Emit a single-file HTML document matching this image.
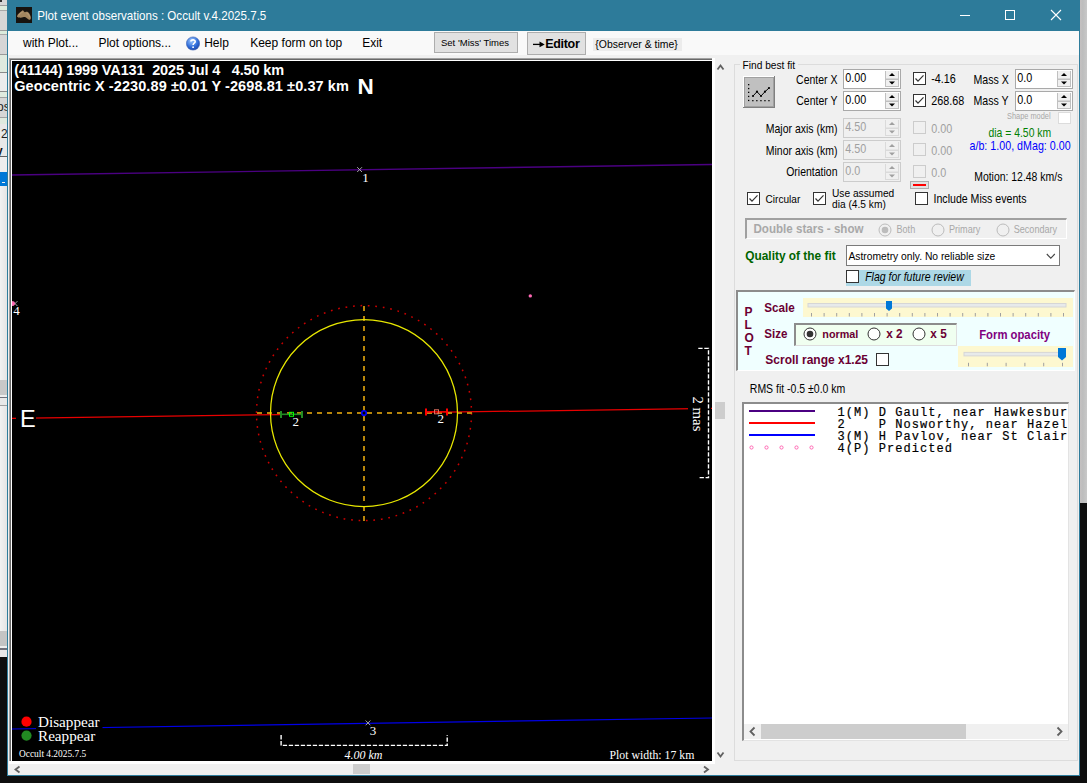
<!DOCTYPE html>
<html><head><meta charset="utf-8"><style>
html,body{margin:0;padding:0}
body{width:1087px;height:783px;position:relative;overflow:hidden;background:#0e0e0e;font-family:"Liberation Sans", sans-serif}
.t{position:absolute;white-space:pre}
.r{position:absolute}
</style></head><body>
<div class="r" style="left:0px;top:0px;width:7px;height:657px;background:linear-gradient(90deg,#f2f2f2,#e4e4e4)"></div>
<div class="r" style="left:0px;top:0px;width:7px;height:72px;background:#d6d6d6"></div>
<div class="r" style="left:0px;top:0px;width:2px;height:2px;background:#303030"></div>
<div class="r" style="left:0px;top:5px;width:7px;height:1px;background:#9a9a9a"></div>
<div class="r" style="left:0px;top:6px;width:7px;height:4px;background:#dcebdc"></div>
<div class="r" style="left:0px;top:10px;width:7px;height:1px;background:#a8a8a8"></div>
<div class="r" style="left:0px;top:30px;width:7px;height:1px;background:#9a9a9a"></div>
<div class="r" style="left:0px;top:31px;width:7px;height:3px;background:#dcebdc"></div>
<div class="r" style="left:0px;top:34px;width:7px;height:1px;background:#a8a8a8"></div>
<div class="r" style="left:0px;top:54px;width:7px;height:1px;background:#9a9a9a"></div>
<div class="r" style="left:0px;top:55px;width:7px;height:17px;background:#dfeadf"></div>
<div class="r" style="left:0px;top:72px;width:7px;height:1px;background:#8a8a8a"></div>
<div class="r" style="left:0px;top:73px;width:7px;height:18px;background:#ececec"></div>
<div class="r" style="left:0px;top:91px;width:7px;height:1px;background:#8a8a8a"></div>
<div class="r" style="left:0px;top:92px;width:7px;height:5px;background:#dfeadf"></div>
<div class="r" style="left:0px;top:97px;width:7px;height:1px;background:#a0a0a0"></div>
<div class="r" style="left:0px;top:98px;width:7px;height:19px;background:#d6d6d6"></div>
<div class="t" style="left:-3px;top:101px;font:12px/1 'Liberation Sans', sans-serif;color:#222">os</div>
<div class="r" style="left:0px;top:117px;width:7px;height:1px;background:#a0a0a0"></div>
<div class="r" style="left:0px;top:118px;width:7px;height:6px;background:#dfeadf"></div>
<div class="r" style="left:0px;top:124px;width:7px;height:32px;background:#e8e8e8"></div>
<div class="t" style="left:1px;top:128px;font:12px/1 'Liberation Sans', sans-serif;color:#222">2</div>
<div class="t" style="left:-4px;top:145px;font:bold 12px/1 'Liberation Sans', sans-serif;color:#111">y</div>
<div class="r" style="left:0px;top:156px;width:7px;height:1px;background:#606060"></div>
<div class="r" style="left:0px;top:157px;width:7px;height:15px;background:#eeeeee"></div>
<div class="r" style="left:0px;top:172px;width:7px;height:14px;background:#0078d7"></div>
<div class="r" style="left:2px;top:182px;width:3px;height:1px;background:#f0f0f0"></div>
<div class="r" style="left:0px;top:380px;width:7px;height:15px;background:#c8c8c8"></div>
<div class="r" style="left:0px;top:395px;width:7px;height:2px;background:#eeeeee"></div>
<div class="r" style="left:0px;top:397px;width:7px;height:1px;background:#70707a"></div>
<div class="r" style="left:0px;top:398px;width:7px;height:7px;background:#e8e8e8"></div>
<div class="r" style="left:0px;top:405px;width:7px;height:1px;background:#a0a0a0"></div>
<div class="r" style="left:0px;top:631px;width:7px;height:15px;background:#c4c4c4"></div>
<div class="r" style="left:0px;top:646px;width:7px;height:2px;background:#eeeeee"></div>
<div class="r" style="left:0px;top:648px;width:7px;height:2px;background:#70707a"></div>
<div class="r" style="left:0px;top:650px;width:7px;height:7px;background:#e8e8e8"></div>
<div class="r" style="left:1080px;top:0px;width:7px;height:503px;background:linear-gradient(90deg,#c4c0c0,#bdbdbd 40%,#c8c8c8)"></div>
<div class="r" style="left:7px;top:0px;width:1073px;height:776px;background:#f0f0f0"></div>
<div class="r" style="left:7px;top:0px;width:1px;height:776px;background:#2f7d9c"></div>
<div class="r" style="left:1079px;top:0px;width:1px;height:776px;background:#2f7d9c"></div>
<div class="r" style="left:7px;top:775px;width:1073px;height:1px;background:#2f7d9c"></div>
<div class="r" style="left:7px;top:0px;width:1073px;height:31px;background:#2d7b9a"></div>
<svg class="r" style="left:16px;top:7px" width="16" height="16" viewBox="0 0 16 16"><rect width="16" height="16" fill="#17130f"/><path d="M0.9 9.6 C1.5 7 4 5 6.8 3.2 C7.8 3.8 8.3 5 9 5.3 C10 4.8 11 4.7 11.8 5 C13.5 6 14.8 9 14.9 11 C14.8 12.5 13.8 13 13 12.8 C11.5 12 10.3 10.3 9 10 C7.5 10 6 10.8 4.5 10.7 C3 10.6 1.8 10.6 0.9 9.6Z" fill="#a3865f"/><path d="M2.5 8.5 C4 6.5 5.5 5.5 6.8 4.8 M10.5 6 C12 6.5 13.5 9 13.8 10.5" stroke="#bfa37e" stroke-width="1.2" fill="none" opacity="0.6"/></svg>
<div class="r" style="left:960px;top:15px;width:10px;height:1px;background:#fff"></div>
<div class="r" style="left:1005px;top:10px;width:10px;height:10px;border:1px solid #fff;box-sizing:border-box"></div>
<svg class="r" style="left:1050px;top:9px" width="12" height="12" viewBox="0 0 12 12"><path d="M1 1 L11 11 M11 1 L1 11" stroke="#fff" stroke-width="1.1"/></svg>
<div class="r" style="left:8px;top:31px;width:1071px;height:24px;background:#f9f9f9"></div>
<svg class="r" style="left:186px;top:35.5px" width="14" height="15" viewBox="0 0 14 15"><defs><radialGradient id="hg" cx="0.4" cy="0.3" r="0.8"><stop offset="0" stop-color="#9cc8ff"/><stop offset="0.6" stop-color="#2c6ad8"/><stop offset="1" stop-color="#1b3e9a"/></radialGradient></defs><circle cx="7" cy="7.5" r="6.6" fill="url(#hg)" stroke="#3a5fb0" stroke-width="0.6"/><path d="M4.9 5.6 C4.9 3.3 9.2 3.3 9.2 5.6 C9.2 7.2 7.1 7.2 7.1 9" stroke="#fff" stroke-width="1.6" fill="none"/><circle cx="7.1" cy="11.2" r="0.9" fill="#fff"/></svg>
<div class="r" style="left:434px;top:32px;width:84px;height:21px;background:#e1e1e1;border:1px solid #adadad;box-sizing:border-box"></div>
<div class="r" style="left:527px;top:32px;width:59px;height:23px;background:#e1e1e1;border:1px solid #adadad;box-sizing:border-box"></div>
<svg class="r" style="left:532px;top:40px" width="14" height="9" viewBox="532 40 14 9"><path d="M533 44.4 H543" stroke="#000" stroke-width="1.3"/><path d="M539.5 41.5 L544.7 44.4 L539.5 47.3Z" fill="#000"/></svg>
<div class="r" style="left:593px;top:38px;width:89px;height:13px;background:#ececec"></div>
<div class="r" style="left:9px;top:58px;width:703px;height:1px;background:#a0a0a0"></div>
<div class="r" style="left:9px;top:58px;width:1px;height:705px;background:#a0a0a0"></div>
<div class="r" style="left:10px;top:59px;width:702px;height:1px;background:#696969"></div>
<div class="r" style="left:10px;top:59px;width:1px;height:703px;background:#696969"></div>
<div class="r" style="left:11px;top:60px;width:701px;height:1px;background:#fff"></div>
<div class="r" style="left:11px;top:60px;width:1px;height:701px;background:#fff"></div>
<div class="r" style="left:712px;top:58px;width:3px;height:706px;background:#fff"></div>
<div class="r" style="left:9px;top:761px;width:706px;height:3px;background:#fff"></div>
<svg class="r" style="left:714px;top:60px" width="14" height="704" viewBox="714 60 14 704"><path d="M717.5 69.5 L720.5 65.5 L723.5 69.5" stroke="#606060" stroke-width="1.8" fill="none"/><path d="M717.5 752.5 L720.5 756.5 L723.5 752.5" stroke="#606060" stroke-width="1.8" fill="none"/><rect x="715" y="402" width="10" height="17" fill="#cdcdcd"/></svg>
<svg class="r" style="left:8px;top:764px" width="708" height="11" viewBox="8 764 708 11"><path d="M19.5 766.5 L15.5 769.5 L19.5 772.5" stroke="#606060" stroke-width="1.8" fill="none"/><path d="M704 766.5 L708 769.5 L704 772.5" stroke="#606060" stroke-width="1.8" fill="none"/><rect x="353" y="764" width="17" height="10" fill="#cdcdcd"/></svg>
<svg class="r" style="left:12px;top:61px" width="700" height="700" viewBox="12 61 700 700"><rect x="12" y="61" width="700" height="700" fill="#000"/><line x1="12" y1="175.0" x2="712" y2="164.5" stroke="#4b0082" stroke-width="1.4" /><line x1="12" y1="418.5" x2="280" y2="414.5872" stroke="#e80000" stroke-width="1.25" /><line x1="447" y1="412.149" x2="712" y2="408.28" stroke="#e80000" stroke-width="1.25" /><line x1="12" y1="729.0" x2="712" y2="718.01" stroke="#0000e8" stroke-width="1.2" /><rect x="16" y="402" width="20" height="30" fill="#000"/><rect x="36" y="713" width="66.5" height="30" fill="#000"/><rect x="688" y="393" width="23" height="41" fill="#000"/><circle cx="364" cy="413.1" r="107.5" fill="none" stroke="#cc0000" stroke-width="1.5" stroke-dasharray="1.7 5.8"/><line x1="364" y1="306" x2="364" y2="521" stroke="#b8860b" stroke-width="2" stroke-dasharray="5 5"/><line x1="257" y1="413" x2="472" y2="413" stroke="#b8860b" stroke-width="2" stroke-dasharray="5 5"/><circle cx="364" cy="413.1" r="93.5" fill="none" stroke="#e8e800" stroke-width="1.25"/><circle cx="364" cy="413.1" r="2.3" fill="none" stroke="#0000ff" stroke-width="1.6"/><line x1="281" y1="414.3" x2="302" y2="414.3" stroke="#228b22" stroke-width="1.6" /><line x1="281" y1="411" x2="281" y2="418" stroke="#228b22" stroke-width="2" /><line x1="302" y1="411" x2="302" y2="418" stroke="#228b22" stroke-width="2" /><rect x="289.5" y="412.3" width="4" height="4" fill="none" stroke="#00ff00" stroke-width="1"/><line x1="426" y1="411.9" x2="447" y2="411.9" stroke="#ff0000" stroke-width="1.6" /><line x1="426" y1="408.5" x2="426" y2="415.5" stroke="#ff0000" stroke-width="2" /><line x1="447" y1="408.5" x2="447" y2="415.5" stroke="#ff0000" stroke-width="2" /><rect x="434.5" y="409.8" width="4" height="4" fill="none" stroke="#e07060" stroke-width="1"/><path d="M357.20000000000005 167.2 L362.0 172.0 M362.0 167.2 L357.20000000000005 172.0" stroke="#a8a8a8" stroke-width="1"/><path d="M365.6 720.5 L370.4 725.3 M370.4 720.5 L365.6 725.3" stroke="#a8a8a8" stroke-width="1"/><path d="M12.6 301.20000000000005 L17.4 306.0 M17.4 301.20000000000005 L12.6 306.0" stroke="#a8a8a8" stroke-width="1"/><circle cx="12.6" cy="303.6" r="2.4" fill="#ff69b4"/><circle cx="530.3" cy="295.9" r="1.7" fill="#ff69b4"/><path d="M698.3 348.4 H708.5 V477.6 H698.3" fill="none" stroke="#fff" stroke-width="1.4" stroke-dasharray="4.3 1.7"/><path d="M281.1 735.1 V745.4 H447.2 V735.1" fill="none" stroke="#fff" stroke-width="1.4" stroke-dasharray="4.3 1.7"/><circle cx="26.5" cy="721.7" r="5.1" fill="#ff0000"/><circle cx="26.5" cy="735.6" r="5.1" fill="#228b22"/></svg>
<div class="r" style="left:734px;top:64px;width:344px;height:697px;border:1px solid #dcdcdc;box-sizing:border-box"></div>
<div class="r" style="left:740px;top:60px;width:58px;height:9px;background:#f0f0f0"></div>
<svg class="r" style="left:743px;top:76px" width="32" height="32" viewBox="743 76 32 32"><rect x="743" y="76" width="32" height="32" fill="#808080"/><rect x="743" y="76" width="31" height="31" fill="#ffffff"/><rect x="744" y="77" width="30" height="30" fill="#a0a0a0"/><rect x="745" y="78" width="28" height="28" fill="#c0c0c0"/><rect x="748" y="84.0" width="1.3" height="1.3" fill="#000"/><rect x="748" y="87.9" width="1.3" height="1.3" fill="#000"/><rect x="748" y="91.7" width="1.3" height="1.3" fill="#000"/><rect x="748" y="95.80000000000001" width="1.3" height="1.3" fill="#000"/><rect x="748" y="99.80000000000001" width="1.3" height="1.3" fill="#000"/><rect x="752.1999999999999" y="100" width="1.3" height="1.3" fill="#000"/><rect x="756.1999999999999" y="100" width="1.3" height="1.3" fill="#000"/><rect x="760.3" y="100" width="1.3" height="1.3" fill="#000"/><rect x="764.3" y="100" width="1.3" height="1.3" fill="#000"/><rect x="768.3" y="100" width="1.3" height="1.3" fill="#000"/><polyline points="753,96 757,91.7 761,96 765,91.7 769,88" fill="none" stroke="#000" stroke-width="1"/><circle cx="753" cy="96" r="1.1" fill="#000"/><circle cx="757" cy="91.7" r="1.1" fill="#000"/><circle cx="761" cy="96" r="1.1" fill="#000"/><circle cx="765" cy="91.7" r="1.1" fill="#000"/><circle cx="769" cy="88" r="1.1" fill="#000"/></svg>
<div class="r" style="left:843px;top:69px;width:58px;height:20px;background:#fff;border:1px solid #a9a9a9;box-sizing:border-box"></div>
<svg class="r" style="left:885px;top:71px" width="14" height="16" viewBox="0 0 14 16"><rect x="0" y="0" width="14" height="16" fill="#f0f0f0"/><rect x="0" y="0" width="1" height="16" fill="#c0c0c0"/><rect x="13" y="0" width="1" height="16" fill="#c0c0c0"/><rect x="0" y="7.5" width="14" height="1.5" fill="#c0c0c0"/><rect x="0" y="15" width="14" height="1" fill="#c0c0c0"/><path d="M4 5 L7 2 L10 5Z" fill="#000"/><path d="M4 10.5 L7 13.5 L10 10.5Z" fill="#000"/></svg>
<div class="r" style="left:843px;top:91px;width:58px;height:20px;background:#fff;border:1px solid #a9a9a9;box-sizing:border-box"></div>
<svg class="r" style="left:885px;top:93px" width="14" height="16" viewBox="0 0 14 16"><rect x="0" y="0" width="14" height="16" fill="#f0f0f0"/><rect x="0" y="0" width="1" height="16" fill="#c0c0c0"/><rect x="13" y="0" width="1" height="16" fill="#c0c0c0"/><rect x="0" y="7.5" width="14" height="1.5" fill="#c0c0c0"/><rect x="0" y="15" width="14" height="1" fill="#c0c0c0"/><path d="M4 5 L7 2 L10 5Z" fill="#000"/><path d="M4 10.5 L7 13.5 L10 10.5Z" fill="#000"/></svg>
<div class="r" style="left:843px;top:118px;width:58px;height:20px;background:#f0f0f0;border:1px solid #cccccc;box-sizing:border-box"></div>
<svg class="r" style="left:885px;top:120px" width="14" height="16" viewBox="0 0 14 16"><rect x="0" y="0" width="14" height="16" fill="#f0f0f0"/><rect x="0" y="0" width="1" height="16" fill="#dadada"/><rect x="13" y="0" width="1" height="16" fill="#dadada"/><rect x="0" y="7.5" width="14" height="1.5" fill="#dadada"/><rect x="0" y="15" width="14" height="1" fill="#dadada"/><path d="M4 5 L7 2 L10 5Z" fill="#a0a0a0"/><path d="M4 10.5 L7 13.5 L10 10.5Z" fill="#a0a0a0"/></svg>
<div class="r" style="left:843px;top:140px;width:58px;height:20px;background:#f0f0f0;border:1px solid #cccccc;box-sizing:border-box"></div>
<svg class="r" style="left:885px;top:142px" width="14" height="16" viewBox="0 0 14 16"><rect x="0" y="0" width="14" height="16" fill="#f0f0f0"/><rect x="0" y="0" width="1" height="16" fill="#dadada"/><rect x="13" y="0" width="1" height="16" fill="#dadada"/><rect x="0" y="7.5" width="14" height="1.5" fill="#dadada"/><rect x="0" y="15" width="14" height="1" fill="#dadada"/><path d="M4 5 L7 2 L10 5Z" fill="#a0a0a0"/><path d="M4 10.5 L7 13.5 L10 10.5Z" fill="#a0a0a0"/></svg>
<div class="r" style="left:843px;top:162px;width:58px;height:20px;background:#f0f0f0;border:1px solid #cccccc;box-sizing:border-box"></div>
<svg class="r" style="left:885px;top:164px" width="14" height="16" viewBox="0 0 14 16"><rect x="0" y="0" width="14" height="16" fill="#f0f0f0"/><rect x="0" y="0" width="1" height="16" fill="#dadada"/><rect x="13" y="0" width="1" height="16" fill="#dadada"/><rect x="0" y="7.5" width="14" height="1.5" fill="#dadada"/><rect x="0" y="15" width="14" height="1" fill="#dadada"/><path d="M4 5 L7 2 L10 5Z" fill="#a0a0a0"/><path d="M4 10.5 L7 13.5 L10 10.5Z" fill="#a0a0a0"/></svg>
<svg class="r" style="left:913px;top:72px" width="13" height="13" viewBox="0 0 13 13"><rect x="0.5" y="0.5" width="12" height="12" fill="#fff" stroke="#333333" stroke-width="1"/><path d="M2.5 6.5 L5 9.2 L10.5 3.3" fill="none" stroke="#333" stroke-width="1.2"/></svg>
<svg class="r" style="left:913px;top:94px" width="13" height="13" viewBox="0 0 13 13"><rect x="0.5" y="0.5" width="12" height="12" fill="#fff" stroke="#333333" stroke-width="1"/><path d="M2.5 6.5 L5 9.2 L10.5 3.3" fill="none" stroke="#333" stroke-width="1.2"/></svg>
<svg class="r" style="left:913px;top:121px" width="13" height="13" viewBox="0 0 13 13"><rect x="0.5" y="0.5" width="12" height="12" fill="#f0f0f0" stroke="#cccccc" stroke-width="1"/></svg>
<svg class="r" style="left:913px;top:143px" width="13" height="13" viewBox="0 0 13 13"><rect x="0.5" y="0.5" width="12" height="12" fill="#f0f0f0" stroke="#cccccc" stroke-width="1"/></svg>
<svg class="r" style="left:913px;top:165px" width="13" height="13" viewBox="0 0 13 13"><rect x="0.5" y="0.5" width="12" height="12" fill="#f0f0f0" stroke="#cccccc" stroke-width="1"/></svg>
<div class="r" style="left:1015px;top:69px;width:58px;height:20px;background:#fff;border:1px solid #a9a9a9;box-sizing:border-box"></div>
<svg class="r" style="left:1057px;top:71px" width="14" height="16" viewBox="0 0 14 16"><rect x="0" y="0" width="14" height="16" fill="#f0f0f0"/><rect x="0" y="0" width="1" height="16" fill="#c0c0c0"/><rect x="13" y="0" width="1" height="16" fill="#c0c0c0"/><rect x="0" y="7.5" width="14" height="1.5" fill="#c0c0c0"/><rect x="0" y="15" width="14" height="1" fill="#c0c0c0"/><path d="M4 5 L7 2 L10 5Z" fill="#000"/><path d="M4 10.5 L7 13.5 L10 10.5Z" fill="#000"/></svg>
<div class="r" style="left:1015px;top:91px;width:58px;height:20px;background:#fff;border:1px solid #a9a9a9;box-sizing:border-box"></div>
<svg class="r" style="left:1057px;top:93px" width="14" height="16" viewBox="0 0 14 16"><rect x="0" y="0" width="14" height="16" fill="#f0f0f0"/><rect x="0" y="0" width="1" height="16" fill="#c0c0c0"/><rect x="13" y="0" width="1" height="16" fill="#c0c0c0"/><rect x="0" y="7.5" width="14" height="1.5" fill="#c0c0c0"/><rect x="0" y="15" width="14" height="1" fill="#c0c0c0"/><path d="M4 5 L7 2 L10 5Z" fill="#000"/><path d="M4 10.5 L7 13.5 L10 10.5Z" fill="#000"/></svg>
<div class="r" style="left:1058px;top:112px;width:13px;height:12px;background:#fff;border:1px solid #dcdcdc;box-sizing:border-box"></div>
<div class="r" style="left:910px;top:181px;width:19px;height:8px;background:#e1e1e1;border:1px solid #adadad;box-sizing:border-box"></div>
<div class="r" style="left:913px;top:184px;width:13px;height:2px;background:#ff0000"></div>
<svg class="r" style="left:747px;top:192px" width="13" height="13" viewBox="0 0 13 13"><rect x="0.5" y="0.5" width="12" height="12" fill="#fff" stroke="#333333" stroke-width="1"/><path d="M2.5 6.5 L5 9.2 L10.5 3.3" fill="none" stroke="#333" stroke-width="1.2"/></svg>
<svg class="r" style="left:813px;top:192px" width="13" height="13" viewBox="0 0 13 13"><rect x="0.5" y="0.5" width="12" height="12" fill="#fff" stroke="#333333" stroke-width="1"/><path d="M2.5 6.5 L5 9.2 L10.5 3.3" fill="none" stroke="#333" stroke-width="1.2"/></svg>
<svg class="r" style="left:915px;top:192px" width="13" height="13" viewBox="0 0 13 13"><rect x="0.5" y="0.5" width="12" height="12" fill="#fff" stroke="#333333" stroke-width="1"/></svg>
<div class="r" style="left:745px;top:218px;width:322px;height:21px;border-top:2px solid #a0a0a0;border-left:2px solid #a0a0a0;border-right:1px solid #fff;border-bottom:1px solid #fff;box-sizing:border-box"></div>
<svg class="r" style="left:878.2px;top:222.5px" width="14" height="14" viewBox="0 0 14 14"><circle cx="7" cy="7" r="6" fill="#f0f0f0" stroke="#bcbcbc" stroke-width="1"/><circle cx="7" cy="7" r="3.3" fill="#bcbcbc"/></svg>
<svg class="r" style="left:930.5px;top:222.5px" width="14" height="14" viewBox="0 0 14 14"><circle cx="7" cy="7" r="6" fill="#f0f0f0" stroke="#bcbcbc" stroke-width="1"/></svg>
<svg class="r" style="left:995.5px;top:222.5px" width="14" height="14" viewBox="0 0 14 14"><circle cx="7" cy="7" r="6" fill="#f0f0f0" stroke="#bcbcbc" stroke-width="1"/></svg>
<div class="r" style="left:846px;top:245px;width:214px;height:21px;background:#fff;border:1px solid #7a7a7a;box-sizing:border-box"></div>
<svg class="r" style="left:1046.2px;top:252.5px" width="10" height="7" viewBox="0 0 10 7"><path d="M0.8 1 L4.8 5.2 L8.8 1" fill="none" stroke="#444" stroke-width="1.1"/></svg>
<div class="r" style="left:846px;top:270px;width:125px;height:16px;background:#add8e6"></div>
<svg class="r" style="left:846px;top:270px" width="13" height="13" viewBox="0 0 13 13"><rect x="0.5" y="0.5" width="12" height="12" fill="#fff" stroke="#333333" stroke-width="1"/></svg>
<div class="r" style="left:736px;top:290px;width:339px;height:81px;background:#f0ffff;border-top:2px solid #8c8c8c;border-left:2px solid #8c8c8c;border-right:1px solid #fff;border-bottom:1px solid #fff;box-sizing:border-box"></div>
<svg class="r" style="left:803px;top:298px" width="270" height="19" viewBox="803 298 270 19"><rect x="803" y="298" width="270" height="19" fill="#fdf8d0"/><rect x="808" y="303.5" width="258" height="3.5" fill="#e7eaea" stroke="#d6d6d6" stroke-width="1"/><rect x="811.0" y="313" width="1" height="3.5" fill="#a0a0a0"/><rect x="823.6" y="313" width="1" height="3.5" fill="#a0a0a0"/><rect x="836.2" y="313" width="1" height="3.5" fill="#a0a0a0"/><rect x="848.8" y="313" width="1" height="3.5" fill="#a0a0a0"/><rect x="861.4" y="313" width="1" height="3.5" fill="#a0a0a0"/><rect x="874.0" y="313" width="1" height="3.5" fill="#a0a0a0"/><rect x="886.6" y="313" width="1" height="3.5" fill="#a0a0a0"/><rect x="899.2" y="313" width="1" height="3.5" fill="#a0a0a0"/><rect x="911.8" y="313" width="1" height="3.5" fill="#a0a0a0"/><rect x="924.4" y="313" width="1" height="3.5" fill="#a0a0a0"/><rect x="937.0" y="313" width="1" height="3.5" fill="#a0a0a0"/><rect x="949.6" y="313" width="1" height="3.5" fill="#a0a0a0"/><rect x="962.2" y="313" width="1" height="3.5" fill="#a0a0a0"/><rect x="974.8" y="313" width="1" height="3.5" fill="#a0a0a0"/><rect x="987.4" y="313" width="1" height="3.5" fill="#a0a0a0"/><rect x="1000.0" y="313" width="1" height="3.5" fill="#a0a0a0"/><rect x="1012.6" y="313" width="1" height="3.5" fill="#a0a0a0"/><rect x="1025.2" y="313" width="1" height="3.5" fill="#a0a0a0"/><rect x="1037.8" y="313" width="1" height="3.5" fill="#a0a0a0"/><rect x="1050.4" y="313" width="1" height="3.5" fill="#a0a0a0"/><rect x="1063.0" y="313" width="1" height="3.5" fill="#a0a0a0"/><path d="M886 301 H892 V308.5 L889 311 L886 308.5Z" fill="#0078d7"/></svg>
<div class="r" style="left:794px;top:323px;width:163px;height:23px;background:#f0fff0;border-top:2px solid #8c8c8c;border-left:2px solid #8c8c8c;border-right:1px solid #ddd;border-bottom:1px solid #ddd;box-sizing:border-box"></div>
<svg class="r" style="left:803.4px;top:327.3px" width="14" height="14" viewBox="0 0 14 14"><circle cx="7" cy="7" r="6" fill="#fff" stroke="#333333" stroke-width="1"/><circle cx="7" cy="7" r="3.3" fill="#333"/></svg>
<svg class="r" style="left:867.3px;top:327.3px" width="14" height="14" viewBox="0 0 14 14"><circle cx="7" cy="7" r="6" fill="#fff" stroke="#333333" stroke-width="1"/></svg>
<svg class="r" style="left:911.5px;top:327.3px" width="14" height="14" viewBox="0 0 14 14"><circle cx="7" cy="7" r="6" fill="#fff" stroke="#333333" stroke-width="1"/></svg>
<svg class="r" style="left:958px;top:346px" width="115" height="21" viewBox="958 346 115 21"><rect x="958" y="346" width="115" height="21" fill="#fdf8d0"/><rect x="964" y="352.4" width="101" height="3.5" fill="#e7eaea" stroke="#d6d6d6" stroke-width="1"/><rect x="968.0" y="362.8" width="1" height="3.5" fill="#a0a0a0"/><rect x="986.8" y="362.8" width="1" height="3.5" fill="#a0a0a0"/><rect x="1005.6" y="362.8" width="1" height="3.5" fill="#a0a0a0"/><rect x="1024.4" y="362.8" width="1" height="3.5" fill="#a0a0a0"/><rect x="1043.2" y="362.8" width="1" height="3.5" fill="#a0a0a0"/><rect x="1062.0" y="362.8" width="1" height="3.5" fill="#a0a0a0"/><path d="M1058 348 H1066 V357 L1062 360.5 L1058 357Z" fill="#0078d7"/></svg>
<svg class="r" style="left:876px;top:353px" width="13" height="13" viewBox="0 0 13 13"><rect x="0.5" y="0.5" width="12" height="12" fill="#fff" stroke="#333333" stroke-width="1"/></svg>
<div class="r" style="left:742px;top:402px;width:327px;height:339px;background:#fff;border-top:2px solid #8c8c8c;border-left:2px solid #8c8c8c;border-right:1px solid #e3e3e3;border-bottom:1px solid #e3e3e3;box-sizing:border-box"></div>
<div class="r" style="left:749px;top:410px;width:66px;height:2px;background:#4b0082"></div>
<div class="r" style="left:749px;top:422px;width:66px;height:2px;background:#ff0000"></div>
<div class="r" style="left:749px;top:434px;width:66px;height:2px;background:#0000ff"></div>
<svg class="r" style="left:745px;top:442px" width="75" height="12" viewBox="745 442 75 12"><circle cx="751.5" cy="447.5" r="1.6" fill="none" stroke="#ff69b4" stroke-width="1"/><circle cx="766.5" cy="447.5" r="1.6" fill="none" stroke="#ff69b4" stroke-width="1"/><circle cx="781.5" cy="447.5" r="1.6" fill="none" stroke="#ff69b4" stroke-width="1"/><circle cx="796.5" cy="447.5" r="1.6" fill="none" stroke="#ff69b4" stroke-width="1"/><circle cx="811.5" cy="447.5" r="1.6" fill="none" stroke="#ff69b4" stroke-width="1"/></svg>
<div class="r" style="left:744px;top:724px;width:324px;height:15px;background:#f0f0f0"></div>
<div class="r" style="left:761px;top:724px;width:205px;height:15px;background:#cdcdcd"></div>
<svg class="r" style="left:744px;top:724px" width="324" height="15" viewBox="744 724 324 15"><path d="M754.5 727.5 L750.5 731.5 L754.5 735.5" stroke="#606060" stroke-width="1.8" fill="none"/><path d="M1057.5 727.5 L1061.5 731.5 L1057.5 735.5" stroke="#606060" stroke-width="1.8" fill="none"/></svg>
<svg class="r" style="left:0;top:0" width="1087" height="783" viewBox="0 0 1087 783"><defs><clipPath id="lbclip"><rect x="744" y="404" width="324" height="320"/></clipPath></defs><text transform="translate(37.30 19.90) scale(0.8928571428571428 1)" x="0" y="0" style="font:normal normal 12.99px 'Liberation Sans', sans-serif;fill:#fff;white-space:pre;">Plot event observations : Occult v.4.2025.7.5</text><text x="23.00" y="46.80" style="font:normal normal 12px 'Liberation Sans', sans-serif;fill:#000;white-space:pre;">with Plot...</text><text x="98.40" y="46.80" style="font:normal normal 12px 'Liberation Sans', sans-serif;fill:#000;white-space:pre;">Plot options...</text><text x="204.20" y="46.80" style="font:normal normal 12px 'Liberation Sans', sans-serif;fill:#000;white-space:pre;">Help</text><text x="250.20" y="46.80" style="font:normal normal 12px 'Liberation Sans', sans-serif;fill:#000;white-space:pre;">Keep form on top</text><text x="362.20" y="46.80" style="font:normal normal 12px 'Liberation Sans', sans-serif;fill:#000;white-space:pre;">Exit</text><text x="441.00" y="46.00" style="font:normal normal 9.5px 'Liberation Sans', sans-serif;fill:#000;white-space:pre;">Set 'Miss' Times</text><text x="545.20" y="47.80" style="font:normal bold 12.5px 'Liberation Sans', sans-serif;fill:#000;white-space:pre;letter-spacing:-0.3px">Editor</text><text transform="translate(595.30 48.40) scale(0.925 1)" x="0" y="0" style="font:normal normal 11.3px 'Liberation Sans', sans-serif;fill:#000;white-space:pre;">{Observer &amp; time}</text><text x="14.20" y="75.20" style="font:normal bold 14.5px 'Liberation Sans', sans-serif;fill:#fff;white-space:pre;letter-spacing:-0.14px">(41144) 1999 VA131&nbsp; 2025 Jul 4 &nbsp; 4.50 km</text><text x="14.20" y="91.00" style="font:normal bold 14.5px 'Liberation Sans', sans-serif;fill:#fff;white-space:pre;letter-spacing:0.09px">Geocentric X -2230.89 ±0.01 Y -2698.81 ±0.37 km</text><text x="357.50" y="94.40" style="font:normal bold 22.5px 'Liberation Sans', sans-serif;fill:#fff;white-space:pre;">N</text><text x="20.00" y="426.80" style="font:normal normal 23.5px 'Liberation Sans', sans-serif;fill:#fff;white-space:pre;">E</text><text x="362.30" y="181.80" style="font:normal normal 13px 'Liberation Serif', serif;fill:#fff;white-space:pre;">1</text><text x="292.60" y="426.20" style="font:normal normal 13px 'Liberation Serif', serif;fill:#fff;white-space:pre;">2</text><text x="437.60" y="423.10" style="font:normal normal 13px 'Liberation Serif', serif;fill:#fff;white-space:pre;">2</text><text x="369.70" y="735.40" style="font:normal normal 13px 'Liberation Serif', serif;fill:#fff;white-space:pre;">3</text><text x="13.30" y="315.40" style="font:normal normal 13px 'Liberation Serif', serif;fill:#fff;white-space:pre;">4</text><text x="38.00" y="726.70" style="font:normal normal 15.2px 'Liberation Serif', serif;fill:#fff;white-space:pre;">Disappear</text><text x="38.00" y="740.50" style="font:normal normal 15.2px 'Liberation Serif', serif;fill:#fff;white-space:pre;">Reappear</text><text x="19.00" y="756.60" style="font:normal normal 9.4px 'Liberation Serif', serif;fill:#fff;white-space:pre;">Occult 4.2025.7.5</text><text x="344.50" y="758.80" style="font:italic normal 12px 'Liberation Serif', serif;fill:#fff;white-space:pre;">4.00 km</text><text transform="translate(609.50 758.90) scale(0.9090909090909091 1)" x="0" y="0" style="font:normal normal 12.98px 'Liberation Serif', serif;fill:#fff;white-space:pre;">Plot width: 17 km</text><text transform="translate(692.5 396.5) rotate(90)" x="0" y="0" style="font:14.8px 'Liberation Serif', serif;fill:#fff">2 mas</text><text transform="translate(742.50 68.70) scale(0.8771929824561404 1)" x="0" y="0" style="font:normal normal 11.63px 'Liberation Sans', sans-serif;fill:#000;white-space:pre;">Find best fit</text><text transform="translate(837.50 83.60) scale(0.8771929824561404 1)" x="0" y="0" text-anchor="end" style="font:normal normal 11.97px 'Liberation Sans', sans-serif;fill:#000;white-space:pre;">Center X</text><text transform="translate(837.50 105.10) scale(0.8771929824561404 1)" x="0" y="0" text-anchor="end" style="font:normal normal 11.97px 'Liberation Sans', sans-serif;fill:#000;white-space:pre;">Center Y</text><text transform="translate(837.50 132.60) scale(0.8771929824561404 1)" x="0" y="0" text-anchor="end" style="font:normal normal 11.97px 'Liberation Sans', sans-serif;fill:#000;white-space:pre;">Major axis (km)</text><text transform="translate(837.50 154.50) scale(0.8771929824561404 1)" x="0" y="0" text-anchor="end" style="font:normal normal 11.97px 'Liberation Sans', sans-serif;fill:#000;white-space:pre;">Minor axis (km)</text><text transform="translate(837.50 176.00) scale(0.8771929824561404 1)" x="0" y="0" text-anchor="end" style="font:normal normal 11.97px 'Liberation Sans', sans-serif;fill:#000;white-space:pre;">Orientation</text><text transform="translate(845.30 82.20) scale(0.8474576271186441 1)" x="0" y="0" style="font:normal normal 12.74px 'Liberation Sans', sans-serif;fill:#000;white-space:pre;">0.00</text><text transform="translate(845.30 104.20) scale(0.8474576271186441 1)" x="0" y="0" style="font:normal normal 12.74px 'Liberation Sans', sans-serif;fill:#000;white-space:pre;">0.00</text><text transform="translate(845.30 131.20) scale(0.8474576271186441 1)" x="0" y="0" style="font:normal normal 12.74px 'Liberation Sans', sans-serif;fill:#a0a0a0;white-space:pre;">4.50</text><text transform="translate(845.30 153.20) scale(0.8474576271186441 1)" x="0" y="0" style="font:normal normal 12.74px 'Liberation Sans', sans-serif;fill:#a0a0a0;white-space:pre;">4.50</text><text transform="translate(845.30 175.20) scale(0.8474576271186441 1)" x="0" y="0" style="font:normal normal 12.74px 'Liberation Sans', sans-serif;fill:#a0a0a0;white-space:pre;">0.0</text><text transform="translate(931.20 83.30) scale(0.8771929824561404 1)" x="0" y="0" style="font:normal normal 12.31px 'Liberation Sans', sans-serif;fill:#000;white-space:pre;">-4.16</text><text transform="translate(931.20 105.00) scale(0.8771929824561404 1)" x="0" y="0" style="font:normal normal 12.31px 'Liberation Sans', sans-serif;fill:#000;white-space:pre;">268.68</text><text transform="translate(931.20 132.50) scale(0.8771929824561404 1)" x="0" y="0" style="font:normal normal 12.31px 'Liberation Sans', sans-serif;fill:#a0a0a0;white-space:pre;">0.00</text><text transform="translate(931.20 154.50) scale(0.8771929824561404 1)" x="0" y="0" style="font:normal normal 12.31px 'Liberation Sans', sans-serif;fill:#a0a0a0;white-space:pre;">0.00</text><text transform="translate(931.20 176.50) scale(0.8771929824561404 1)" x="0" y="0" style="font:normal normal 12.31px 'Liberation Sans', sans-serif;fill:#a0a0a0;white-space:pre;">0.0</text><text transform="translate(973.50 83.60) scale(0.8771929824561404 1)" x="0" y="0" style="font:normal normal 12.08px 'Liberation Sans', sans-serif;fill:#000;white-space:pre;">Mass X</text><text transform="translate(973.50 105.10) scale(0.8771929824561404 1)" x="0" y="0" style="font:normal normal 12.08px 'Liberation Sans', sans-serif;fill:#000;white-space:pre;">Mass Y</text><text transform="translate(1017.30 82.20) scale(0.8474576271186441 1)" x="0" y="0" style="font:normal normal 12.74px 'Liberation Sans', sans-serif;fill:#000;white-space:pre;">0.0</text><text transform="translate(1017.30 104.20) scale(0.8474576271186441 1)" x="0" y="0" style="font:normal normal 12.74px 'Liberation Sans', sans-serif;fill:#000;white-space:pre;">0.0</text><text transform="translate(1007.00 119.00) scale(0.8771929824561404 1)" x="0" y="0" style="font:normal normal 8.44px 'Liberation Sans', sans-serif;fill:#a8a8a8;white-space:pre;">Shape model</text><text transform="translate(988.50 136.50) scale(0.8771929824561404 1)" x="0" y="0" style="font:normal normal 11.86px 'Liberation Sans', sans-serif;fill:#008000;white-space:pre;">dia = 4.50 km</text><text transform="translate(969.50 150.20) scale(0.8771929824561404 1)" x="0" y="0" style="font:normal normal 12.2px 'Liberation Sans', sans-serif;fill:#0000ff;white-space:pre;">a/b: 1.00, dMag: 0.00</text><text transform="translate(974.20 180.50) scale(0.8771929824561404 1)" x="0" y="0" style="font:normal normal 11.91px 'Liberation Sans', sans-serif;fill:#000;white-space:pre;">Motion: 12.48 km/s</text><text transform="translate(765.50 202.80) scale(0.8771929824561404 1)" x="0" y="0" style="font:normal normal 11.51px 'Liberation Sans', sans-serif;fill:#000;white-space:pre;">Circular</text><text transform="translate(832.00 196.80) scale(0.8771929824561404 1)" x="0" y="0" style="font:normal normal 11.63px 'Liberation Sans', sans-serif;fill:#000;white-space:pre;">Use assumed</text><text transform="translate(832.00 208.30) scale(0.8771929824561404 1)" x="0" y="0" style="font:normal normal 11.63px 'Liberation Sans', sans-serif;fill:#000;white-space:pre;">dia (4.5 km)</text><text transform="translate(933.50 202.80) scale(0.8771929824561404 1)" x="0" y="0" style="font:normal normal 12.08px 'Liberation Sans', sans-serif;fill:#000;white-space:pre;">Include Miss events</text><text transform="translate(753.50 232.80) scale(0.9174311926605504 1)" x="0" y="0" style="font:normal bold 12.64px 'Liberation Sans', sans-serif;fill:#a8a8a8;white-space:pre;">Double stars - show</text><text transform="translate(896.50 233.20) scale(0.8771929824561404 1)" x="0" y="0" style="font:normal normal 10.37px 'Liberation Sans', sans-serif;fill:#a8a8a8;white-space:pre;">Both</text><text transform="translate(949.00 233.20) scale(0.8771929824561404 1)" x="0" y="0" style="font:normal normal 10.37px 'Liberation Sans', sans-serif;fill:#a8a8a8;white-space:pre;">Primary</text><text transform="translate(1013.70 233.20) scale(0.8771929824561404 1)" x="0" y="0" style="font:normal normal 10.37px 'Liberation Sans', sans-serif;fill:#a8a8a8;white-space:pre;">Secondary</text><text transform="translate(745.20 259.60) scale(0.9174311926605504 1)" x="0" y="0" style="font:normal bold 12.97px 'Liberation Sans', sans-serif;fill:#006400;white-space:pre;">Quality of the fit</text><text transform="translate(848.50 259.50) scale(0.8771929824561404 1)" x="0" y="0" style="font:normal normal 11.74px 'Liberation Sans', sans-serif;fill:#000;white-space:pre;">Astrometry only. No reliable size</text><text transform="translate(865.20 281.30) scale(0.8771929824561404 1)" x="0" y="0" style="font:italic normal 11.97px 'Liberation Sans', sans-serif;fill:#000;white-space:pre;">Flag for future review</text><text transform="translate(744.60 315.70) scale(0.9174311926605504 1)" x="0" y="0" style="font:normal bold 13.08px 'Liberation Sans', sans-serif;fill:#6b0033;white-space:pre;">P</text><text transform="translate(744.60 328.80) scale(0.9174311926605504 1)" x="0" y="0" style="font:normal bold 13.08px 'Liberation Sans', sans-serif;fill:#6b0033;white-space:pre;">L</text><text transform="translate(744.60 341.90) scale(0.9174311926605504 1)" x="0" y="0" style="font:normal bold 13.08px 'Liberation Sans', sans-serif;fill:#6b0033;white-space:pre;">O</text><text transform="translate(744.60 355.00) scale(0.9174311926605504 1)" x="0" y="0" style="font:normal bold 13.08px 'Liberation Sans', sans-serif;fill:#6b0033;white-space:pre;">T</text><text transform="translate(764.30 312.00) scale(0.9174311926605504 1)" x="0" y="0" style="font:normal bold 12.75px 'Liberation Sans', sans-serif;fill:#6b0033;white-space:pre;">Scale</text><text transform="translate(764.30 338.00) scale(0.9174311926605504 1)" x="0" y="0" style="font:normal bold 12.64px 'Liberation Sans', sans-serif;fill:#6b0033;white-space:pre;">Size</text><text transform="translate(765.30 363.60) scale(0.9174311926605504 1)" x="0" y="0" style="font:normal bold 13.08px 'Liberation Sans', sans-serif;fill:#6b0033;white-space:pre;">Scroll range x1.25</text><text transform="translate(822.30 338.30) scale(0.9174311926605504 1)" x="0" y="0" style="font:normal bold 11.77px 'Liberation Sans', sans-serif;fill:#6b0033;white-space:pre;">normal</text><text transform="translate(886.20 338.30) scale(0.9174311926605504 1)" x="0" y="0" style="font:normal bold 12.86px 'Liberation Sans', sans-serif;fill:#6b0033;white-space:pre;">x 2</text><text transform="translate(930.30 338.30) scale(0.9174311926605504 1)" x="0" y="0" style="font:normal bold 12.86px 'Liberation Sans', sans-serif;fill:#6b0033;white-space:pre;">x 5</text><text transform="translate(979.20 339.20) scale(0.9174311926605504 1)" x="0" y="0" style="font:normal bold 12.32px 'Liberation Sans', sans-serif;fill:#800080;white-space:pre;">Form opacity</text><text transform="translate(749.80 393.00) scale(0.8771929824561404 1)" x="0" y="0" style="font:normal normal 11.97px 'Liberation Sans', sans-serif;fill:#000;white-space:pre;">RMS fit -0.5 ±0.0 km</text><text x="837.50" y="415.90" clip-path="url(#lbclip)" style="font:normal normal 12px 'Liberation Mono', monospace;fill:#000;white-space:pre;letter-spacing:1.04px;stroke:#000;stroke-width:0.2px">1(M) D Gault, near Hawkesbur</text><text x="837.50" y="427.90" clip-path="url(#lbclip)" style="font:normal normal 12px 'Liberation Mono', monospace;fill:#000;white-space:pre;letter-spacing:1.04px;stroke:#000;stroke-width:0.2px">2    P Nosworthy, near Hazel</text><text x="837.50" y="439.90" clip-path="url(#lbclip)" style="font:normal normal 12px 'Liberation Mono', monospace;fill:#000;white-space:pre;letter-spacing:1.04px;stroke:#000;stroke-width:0.2px">3(M) H Pavlov, near St Clair</text><text x="837.50" y="451.90" clip-path="url(#lbclip)" style="font:normal normal 12px 'Liberation Mono', monospace;fill:#000;white-space:pre;letter-spacing:1.04px;stroke:#000;stroke-width:0.2px">4(P) Predicted</text></svg>
</body></html>
